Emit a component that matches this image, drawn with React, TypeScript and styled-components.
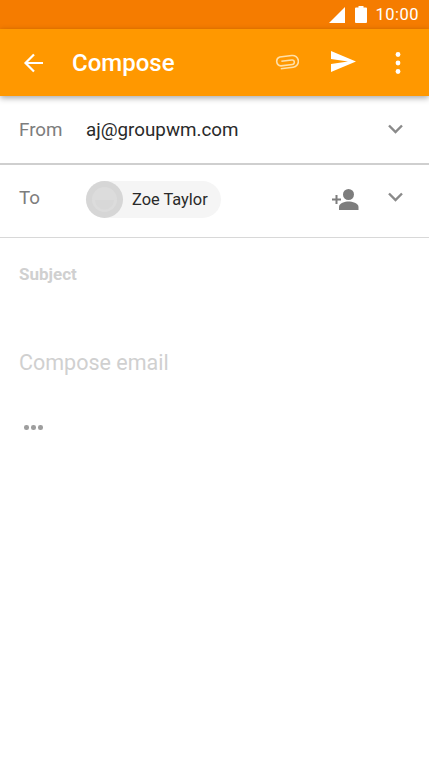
import styled, { createGlobalStyle } from 'styled-components';

const Global = createGlobalStyle`
  html, body {
    margin: 0;
    padding: 0;
    background: #fff;
    font-family: Roboto, "Liberation Sans", sans-serif;
  }
  * { box-sizing: border-box; }
`;

const Screen = styled.div`
  width: 429px;
  height: 764px;
  overflow: hidden;
  display: flex;
  flex-direction: column;
  background: #fff;
`;

const StatusBar = styled.div`
  height: 29px;
  background: #f57c00;
  color: #fff;
  display: flex;
  align-items: center;
  justify-content: flex-end;
  padding-right: 10px;
  font-size: 16.5px;
  letter-spacing: 0.5px;
`;

const StatusIcon = styled.svg<{ $mr: number }>`
  display: block;
  margin-right: ${(p) => p.$mr}px;
`;

const Toolbar = styled.div`
  height: 67px;
  background: #ff9800;
  display: flex;
  align-items: center;
  box-shadow: 0 2px 6px rgba(0, 0, 0, 0.35);
  position: relative;
  z-index: 1;
  padding: 0 28px 0 22px;
`;

const ToolIcon = styled.svg<{ $ml?: number; $mr?: number; $raise?: number }>`
  display: block;
  flex: none;
  margin-left: ${(p) => p.$ml ?? 0}px;
  margin-right: ${(p) => p.$mr ?? 0}px;
  margin-bottom: ${(p) => p.$raise ?? 0}px;
`;

const Title = styled.div`
  color: #fff;
  font-size: 24px;
  font-weight: 500;
  margin-left: 26px;
  flex: 1;
`;

const Row = styled.div<{ $h: number; $line: string; $thick?: boolean; $pb?: number }>`
  height: ${(p) => p.$h}px;
  border-bottom: ${(p) => (p.$thick ? 2 : 1)}px solid ${(p) => p.$line};
  display: flex;
  align-items: center;
  padding: 0 0 ${(p) => p.$pb ?? 0}px 19px;
`;

const Label = styled.div<{ $raise?: number }>`
  width: 67px;
  font-size: 18.8px;
  color: #7d7d7d;
  flex: none;
  margin-bottom: ${(p) => p.$raise ?? 0}px;
`;

const Value = styled.div`
  font-size: 18.8px;
  color: #2a2a2a;
  flex: 1;
`;

const Chip = styled.div`
  height: 37px;
  border-radius: 19px;
  background: #f5f5f5;
  display: flex;
  align-items: center;
  padding-right: 13px;
  font-size: 16.4px;
  color: #2a2a2a;
`;

const Avatar = styled.div`
  width: 37px;
  height: 37px;
  border-radius: 50%;
  background: #d6d6d6;
  margin-right: 9px;
  display: flex;
  align-items: center;
  justify-content: center;
`;

const Spacer = styled.div`
  flex: 1;
`;

const Chevron = styled.svg<{ $raise?: number }>`
  display: block;
  flex: none;
  margin: 0 26px ${(p) => p.$raise ?? 0}px 0;
`;

const Subject = styled.div`
  font-size: 17px;
  font-weight: 700;
  color: #d0d0d0;
  padding: 26px 0 0 19px;
  line-height: 20px;
`;

const Body = styled.div`
  font-size: 21.5px;
  color: #d0d0d0;
  padding: 66px 0 0 19px;
  line-height: 26px;
`;

const Dots = styled.div`
  display: flex;
  gap: 2.5px;
  padding: 49px 0 0 24px;
`;

const Dot = styled.span`
  width: 4.5px;
  height: 4.5px;
  border-radius: 50%;
  background: #9e9e9e;
`;

const ChevronDown = ({ raise }: { raise?: number }) => (
  <Chevron $raise={raise} width="15" height="10" viewBox="0 0 15 10">
    <path d="M1 1.5 7.5 8 14 1.5" fill="none" stroke="#8a8a8a" strokeWidth="2.4" />
  </Chevron>
);

export default function App() {
  return (
    <Screen>
      <Global />
      <StatusBar>
        <StatusIcon $mr={10} width="16" height="16" viewBox="0 0 16 16">
          <path d="M0 16 16 0v16z" fill="#fff" />
        </StatusIcon>
        <StatusIcon $mr={8} width="12" height="17" viewBox="0 0 12 17">
          <path d="M3.5 0h5v1.500H11a1 1 0 0 1 1 1V16a1 1 0 0 1-1 1H1a1 1 0 0 1-1-1V2.500a1 1 0 0 1 1-1h2.500z" fill="#fff" />
        </StatusIcon>
        10:00
      </StatusBar>
      <Toolbar>
        <ToolIcon width="24" height="24" viewBox="0 0 24 24">
          <path d="M21 12H4M12 3.5 3.5 12l8.500 8.500" fill="none" stroke="#fff" strokeWidth="2.2" />
        </ToolIcon>
        <Title>Compose</Title>
        <ToolIcon $raise={2} width="25" height="16" viewBox="0 0 25 16">
          <path
            transform="rotate(-7 12.5 8)"
            d="M6 14h12.500a5.500 5.500 0 0 0 0-11.800H6.500a4.600 4.600 0 0 0 0 9H18a2.200 2.200 0 0 0 0-4.500H7.500"
            fill="none"
            stroke="#ffe0a8"
            strokeWidth="1.6"
          />
        </ToolIcon>
        <ToolIcon $ml={32} $raise={2} width="25" height="21" viewBox="0 0 25 21">
          <path d="M0 0 25 10.500 0 21v-8L17 10.500 0 8z" fill="#fff" />
        </ToolIcon>
        <ToolIcon $ml={39} width="6" height="22" viewBox="0 0 6 22">
          <circle cx="3" cy="2.5" r="2.4" fill="#fff" />
          <circle cx="3" cy="11" r="2.4" fill="#fff" />
          <circle cx="3" cy="19.5" r="2.4" fill="#fff" />
        </ToolIcon>
      </Toolbar>
      <Row $h={69} $line="#cfcfcf" $thick>
        <Label>From</Label>
        <Value>aj@groupwm.com</Value>
        <ChevronDown raise={2} />
      </Row>
      <Row $h={73} $line="#d8d8d8" $pb={4}>
        <Label $raise={3}>To</Label>
        <Chip>
          <Avatar>
            <svg width="27" height="27" viewBox="0 0 27 27">
              <circle cx="13.5" cy="13.5" r="12.5" fill="#dcdcdc" />
              <path d="M4 14h19a9.500 9.500 0 0 1-19 0z" fill="#d8d8d8" />
            </svg>
          </Avatar>
          Zoe Taylor
        </Chip>
        <Spacer />
        <ToolIcon $mr={29} width="27" height="21" viewBox="0 0 27 21">
          <circle cx="16.5" cy="5.5" r="5.5" fill="#7d7d7d" />
          <path d="M7 21v-3c0-4 6-5.500 9.500-5.500S26.500 14 26.500 18v3z" fill="#7d7d7d" />
          <path d="M0 10.500h9M4.500 6v9" stroke="#7d7d7d" strokeWidth="2" />
        </ToolIcon>
        <ChevronDown raise={5} />
      </Row>
      <Subject>Subject</Subject>
      <Body>Compose email</Body>
      <Dots>
        <Dot />
        <Dot />
        <Dot />
      </Dots>
    </Screen>
  );
}
